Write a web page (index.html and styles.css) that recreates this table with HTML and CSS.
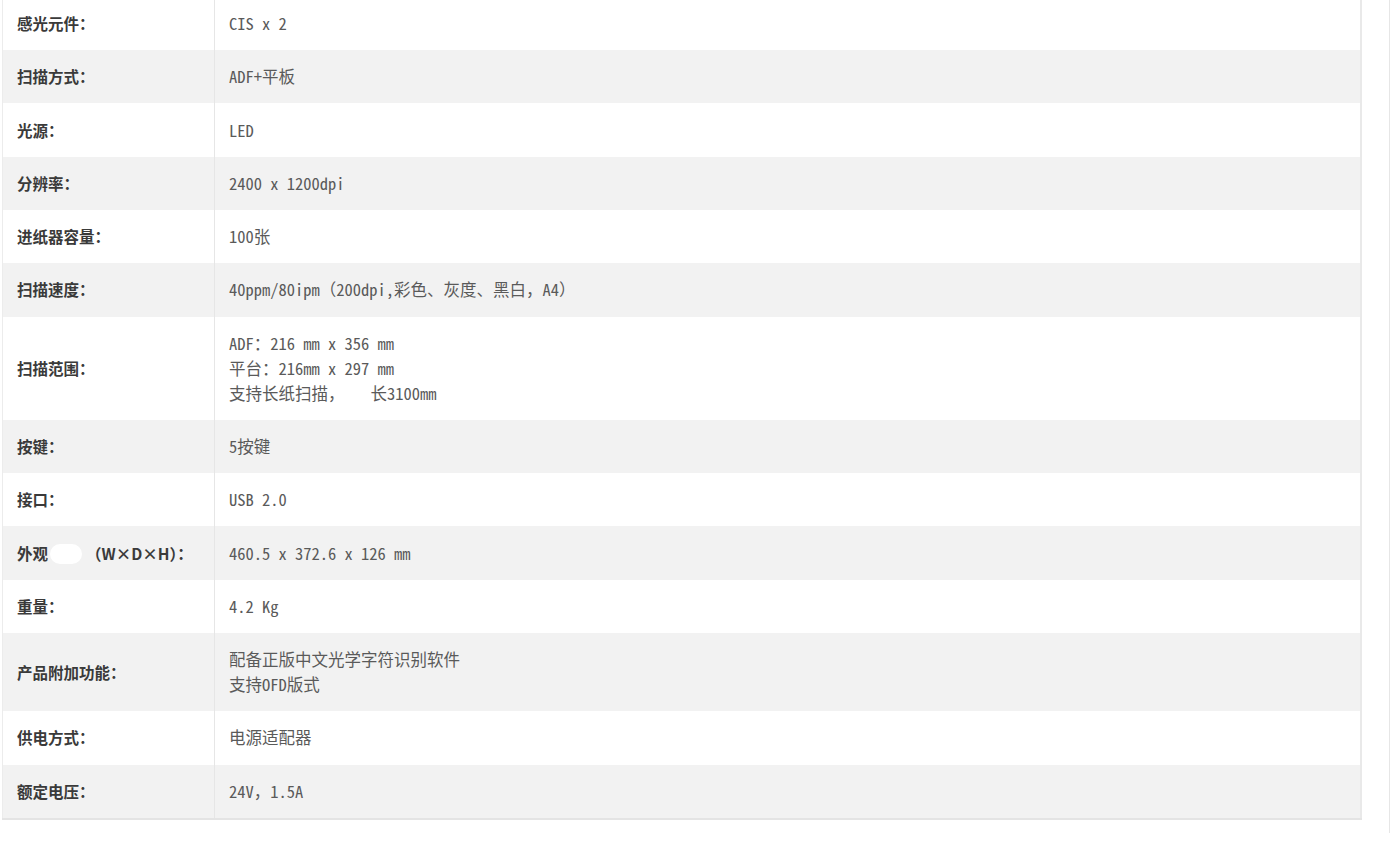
FILE: index.html
```html
<!DOCTYPE html>
<html lang="zh-CN">
<head>
    <meta charset="UTF-8">
    <title>产品参数</title>
    <link rel="stylesheet" href="styles.css">
</head>
<body>
    <div class="page">
        <table class="spec">
            <tr class="first"><th>感光元件：</th><td>CIS x 2</td></tr>
            <tr><th>扫描方式：</th><td>ADF+平板</td></tr>
            <tr><th>光源：</th><td>LED</td></tr>
            <tr><th>分辨率：</th><td>2400 x 1200dpi</td></tr>
            <tr><th>进纸器容量：</th><td>100张</td></tr>
            <tr><th>扫描速度：</th><td>40ppm/80ipm（200dpi,彩色、灰度、黑白，A4）</td></tr>
            <tr><th>扫描范围：</th><td>ADF：216 mm x 356 mm<br>平台：216mm x 297 mm<br>支持长纸扫描，<span class="mask small"></span>长3100mm</td></tr>
            <tr><th>按键：</th><td>5按键</td></tr>
            <tr><th>接口：</th><td>USB 2.0</td></tr>
            <tr><th>外观<span class="mask"></span>（W×D×H）：</th><td>460.5 x 372.6 x 126 mm</td></tr>
            <tr><th>重量：</th><td>4.2 Kg</td></tr>
            <tr><th>产品附加功能：</th><td>配备正版中文光学字符识别软件<br>支持OFD版式</td></tr>
            <tr><th>供电方式：</th><td>电源适配器</td></tr>
            <tr><th>额定电压：</th><td>24V，1.5A</td></tr>
        </table>
    </div>
</body>
</html>
```

FILE: styles.css
```css
body {
    margin: 0;
    background: #fff;
    font-family: "Noto Sans CJK SC", sans-serif;
}
.page {
    width: 1390px;
    height: 833px;
    border-right: 1px solid #e6e6e6;
    padding-left: 2px;
    box-sizing: border-box;
}
.spec {
    width: 1360px;
    border-collapse: collapse;
    border-left: 1px solid #ececec;
    border-right: 2px solid #e9e9e9;
    border-bottom: 2px solid #e4e4e4;
}
.spec th,
.spec td {
    padding: 14.15px 14px;
    line-height: 25px;
    text-align: left;
    vertical-align: middle;
}
.spec th {
    width: 183px;
    font-size: 15.5px;
    font-weight: 700;
    color: #3a3a3a;
    border-right: 1px solid #e6e6e6;
}
.spec td {
    font-family: "Noto Sans Mono CJK SC", "Liberation Mono", "Noto Sans CJK SC", monospace;
    font-size: 16.5px;
    color: #5a5a5a;
}
.spec tr.first th,
.spec tr.first td {
    padding-top: 11px;
}
.spec tr:nth-child(even) {
    background: #f2f2f2;
}
.mask {
    display: inline-block;
    width: 32px;
    height: 20px;
    margin: 0 4px 0 2px;
    vertical-align: -4px;
    background: #fff;
    border-radius: 10px;
}
.mask.small {
    width: 26px;
    margin: 0;
}
```
